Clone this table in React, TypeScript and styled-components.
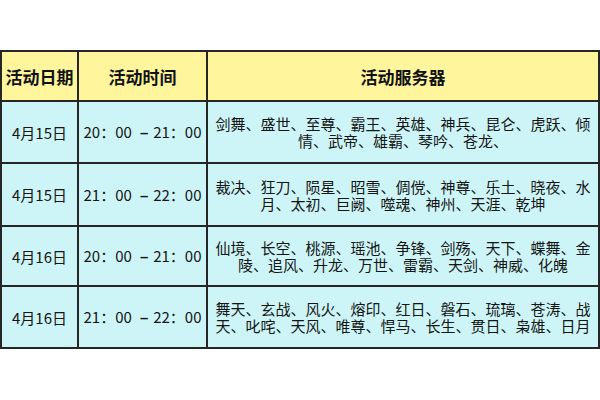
import React from "react";
import styled, { createGlobalStyle } from "styled-components";

const Global = createGlobalStyle`
  html, body { margin: 0; padding: 0; background: #ffffff; }
  body { font-family: "Noto Sans CJK SC", "Noto Sans", sans-serif; color: #151515; }
`;

const Page = styled.div`
  width: 600px;
  height: 400px;
  padding-top: 50px;
  box-sizing: border-box;
  background: #ffffff;
`;

const Table = styled.table`
  width: 598px;
  border-collapse: collapse;
  table-layout: fixed;
  border: 2px solid #262626;
`;

const HeadRow = styled.tr`
  height: 50px;
  background: #fef59c;
`;

const BodyRow = styled.tr<{ $h: number }>`
  height: ${(p) => p.$h}px;
  background: #cdf5f8;
`;

const HeadCell = styled.th`
  border: 2px solid #262626;
  padding: 0;
  font-size: 17px;
  font-weight: 700;
  text-align: center;
  vertical-align: middle;
  color: #111;
  white-space: nowrap;
`;

const Cell = styled.td`
  border: 2px solid #262626;
  padding: 0;
  font-size: 15px;
  line-height: 17px;
  text-align: center;
  vertical-align: middle;
  white-space: nowrap;
  color: #151515;
`;

const Dash = styled.span`
  display: inline-block;
  width: 18px;
  text-align: center;
  font-family: "Liberation Sans", sans-serif;
  font-weight: 700;
`;

const ServerCell = styled.td`
  border: 2px solid #262626;
  padding: 0 6px;
  font-size: 15px;
  line-height: 17px;
  text-align: center;
  vertical-align: middle;
  color: #151515;
  word-break: break-all;
`;

const rows = [
  {
    date: "4月15日",
    from: "20：00",
    to: "21：00",
    servers: "剑舞、盛世、至尊、霸王、英雄、神兵、昆仑、虎跃、倾情、武帝、雄霸、琴吟、苍龙、",
    h: 62,
  },
  {
    date: "4月15日",
    from: "21：00",
    to: "22：00",
    servers: "裁决、狂刀、陨星、昭雪、倜傥、神尊、乐土、晓夜、水月、太初、巨阙、噬魂、神州、天涯、乾坤",
    h: 63,
  },
  {
    date: "4月16日",
    from: "20：00",
    to: "21：00",
    servers: "仙境、长空、桃源、瑶池、争锋、剑殇、天下、蝶舞、金陵、追风、升龙、万世、雷霸、天剑、神威、化魄",
    h: 60,
  },
  {
    date: "4月16日",
    from: "21：00",
    to: "22：00",
    servers: "舞天、玄战、风火、熔印、红日、磐石、琉璃、苍涛、战天、叱咤、天风、唯尊、悍马、长生、贯日、枭雄、日月",
    h: 62,
  },
];

export default function App() {
  return (
    <Page>
      <Global />
      <Table>
        <colgroup>
          <col style={{ width: 77 }} />
          <col style={{ width: 129 }} />
          <col style={{ width: 392 }} />
        </colgroup>
        <thead>
          <HeadRow>
            <HeadCell>活动日期</HeadCell>
            <HeadCell>活动时间</HeadCell>
            <HeadCell>活动服务器</HeadCell>
          </HeadRow>
        </thead>
        <tbody>
          {rows.map((r, i) => (
            <BodyRow key={i} $h={r.h}>
              <Cell>{r.date}</Cell>
              <Cell>
                {r.from} <Dash>–</Dash>{r.to}
              </Cell>
              <ServerCell>{r.servers}</ServerCell>
            </BodyRow>
          ))}
        </tbody>
      </Table>
    </Page>
  );
}
